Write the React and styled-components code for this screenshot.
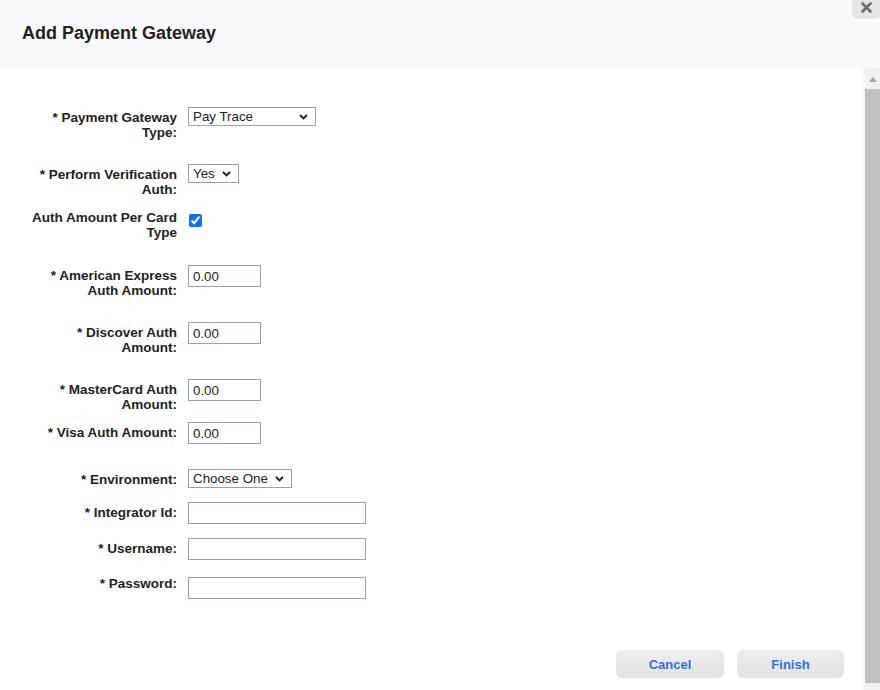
import React from "react";
import styled, { createGlobalStyle } from "styled-components";

const Global = createGlobalStyle`
  html, body { margin: 0; padding: 0; background: #ffffff; }
  body { font-family: "Liberation Sans", Arial, sans-serif; }
  * { box-sizing: border-box; }
`;

const Page = styled.div`
  position: relative;
  width: 880px;
  height: 690px;
  display: flex;
  flex-direction: column;
  overflow: hidden;
  background: #ffffff;
`;

const Header = styled.header`
  height: 68px;
  flex: none;
  display: flex;
  align-items: center;
  padding: 0 0 1px 22px;
  background: #f8f9fb;
`;

const Title = styled.h1`
  margin: 0;
  font-size: 18px;
  font-weight: 700;
  color: #222222;
  letter-spacing: 0;
`;

const CloseButton = styled.button`
  position: absolute;
  top: -10px;
  right: -1px;
  width: 29px;
  height: 29px;
  border: none;
  border-radius: 6px;
  background: #e5e5e5;
  padding: 12px 0 0 0;
  display: flex;
  justify-content: center;
  align-items: flex-start;
  cursor: pointer;
`;

const Body = styled.div`
  flex: 1;
  min-height: 0;
  display: flex;
`;

const Content = styled.div`
  flex: 1;
  display: flex;
  flex-direction: column;
  padding: 39px 19px 0 27px;
`;

const Row = styled.div`
  display: flex;
  align-items: flex-start;
  gap: 11px;
  height: ${(p) => p.$h}px;
`;

const Label = styled.label`
  width: 150px;
  flex: none;
  text-align: right;
  font-size: 13.5px;
  font-weight: 700;
  line-height: 15px;
  color: #222222;
  padding-top: ${(p) => p.$pt || 0}px;
`;

const Control = styled.div`
  position: relative;
  padding-top: ${(p) => p.$pt || 0}px;
  display: flex;
`;

const SelectWrap = styled.div`
  position: relative;
  width: ${(p) => p.$w}px;
`;

const Select = styled.select`
  appearance: none;
  -webkit-appearance: none;
  width: 100%;
  height: 19px;
  border: 1px solid #9aa1ac;
  border-radius: 0;
  background: #ffffff;
  padding: 0 0 0 4px;
  margin: 0;
  font-family: "Liberation Sans", Arial, sans-serif;
  font-size: 13.33px;
  line-height: 17px;
  color: #222222;
  outline: none;
`;

const Chevron = styled.svg`
  position: absolute;
  right: 8px;
  top: 7px;
  pointer-events: none;
`;

const TextInput = styled.input`
  width: ${(p) => p.$w}px;
  height: 22px;
  border: 1px solid #9aa1ac;
  border-radius: 0;
  padding: 0 0 0 4px;
  margin: 0;
  font-family: "Liberation Sans", Arial, sans-serif;
  font-size: 13.33px;
  color: #222222;
  background: #ffffff;
  outline: none;
`;

const Checkbox = styled.input`
  width: 13px;
  height: 13px;
  margin: 0 0 0 1px;
  accent-color: #0b74f5;
`;

const Actions = styled.div`
  display: flex;
  justify-content: flex-end;
  gap: 13px;
`;

const Button = styled.button`
  width: ${(p) => p.$w}px;
  height: 28px;
  border: none;
  border-radius: 6px;
  background: linear-gradient(#eeeeee, #e2e2e2);
  color: #2f6fe4;
  font-family: "Liberation Sans", Arial, sans-serif;
  font-size: 13px;
  font-weight: 700;
  cursor: pointer;
  padding: 0;
`;

const Scrollbar = styled.div`
  width: 17px;
  flex: none;
  display: flex;
  flex-direction: column;
  background: #f1f1f1;
  border-left: 2px solid #f6f6f6;
`;

const ScrollArrow = styled.div`
  height: 21px;
  display: flex;
  justify-content: center;
  align-items: center;
  padding-top: 1px;
`;

const ScrollThumb = styled.div`
  flex: 1;
  margin-bottom: 7px;
  background: #c1c1c1;
`;

const ChevronIcon = () => (
  <Chevron width="9" height="6" viewBox="0 0 9 6">
    <path d="M1 1 L4.5 4.5 L8 1" fill="none" stroke="#222" strokeWidth="1.9" />
  </Chevron>
);

const SelectField = ({ w, value, options }) => (
  <SelectWrap $w={w}>
    <Select defaultValue={value}>
      {options.map((o) => (
        <option key={o}>{o}</option>
      ))}
    </Select>
    <ChevronIcon />
  </SelectWrap>
);

export default function App() {
  return (
    <>
      <Global />
      <Page>
        <Header>
          <Title>Add Payment Gateway</Title>
        </Header>
        <CloseButton aria-label="Close">
          <svg width="11" height="11" viewBox="0 0 11 11">
            <path d="M1.5 1.5 L9.5 9.5 M9.5 1.5 L1.5 9.5" stroke="#6e6e6e" strokeWidth="2.6" strokeLinecap="round" />
          </svg>
        </CloseButton>
        <Body>
          <Content>
            <Row $h={57}>
              <Label $pt={3}>* Payment Gateway Type:</Label>
              <Control>
                <SelectField w={128} value="Pay Trace" options={["Pay Trace", "Authorize.Net", "Stripe"]} />
              </Control>
            </Row>
            <Row $h={46}>
              <Label $pt={3}>* Perform Verification Auth:</Label>
              <Control>
                <SelectField w={51} value="Yes" options={["Yes", "No"]} />
              </Control>
            </Row>
            <Row $h={55}>
              <Label>Auth Amount Per Card Type</Label>
              <Control $pt={4}>
                <Checkbox type="checkbox" defaultChecked />
              </Control>
            </Row>
            <Row $h={57}>
              <Label $pt={3}>* American Express Auth Amount:</Label>
              <Control>
                <TextInput $w={73} defaultValue="0.00" />
              </Control>
            </Row>
            <Row $h={57}>
              <Label $pt={3}>* Discover Auth Amount:</Label>
              <Control>
                <TextInput $w={73} defaultValue="0.00" />
              </Control>
            </Row>
            <Row $h={43}>
              <Label $pt={3}>* MasterCard Auth Amount:</Label>
              <Control>
                <TextInput $w={73} defaultValue="0.00" />
              </Control>
            </Row>
            <Row $h={47}>
              <Label $pt={3}>* Visa Auth Amount:</Label>
              <Control>
                <TextInput $w={73} defaultValue="0.00" />
              </Control>
            </Row>
            <Row $h={33}>
              <Label $pt={3}>* Environment:</Label>
              <Control>
                <SelectField w={104} value="Choose One" options={["Choose One", "Sandbox", "Production"]} />
              </Control>
            </Row>
            <Row $h={36}>
              <Label $pt={3}>* Integrator Id:</Label>
              <Control>
                <TextInput $w={178} />
              </Control>
            </Row>
            <Row $h={38}>
              <Label $pt={3}>* Username:</Label>
              <Control>
                <TextInput $w={178} />
              </Control>
            </Row>
            <Row $h={74}>
              <Label $pt={0}>* Password:</Label>
              <Control $pt={1}>
                <TextInput $w={178} type="password" />
              </Control>
            </Row>
            <Actions>
              <Button $w={108}>Cancel</Button>
              <Button $w={107}>Finish</Button>
            </Actions>
          </Content>
          <Scrollbar>
            <ScrollArrow>
              <svg width="8" height="5" viewBox="0 0 8 5">
                <path d="M0 5 L4 0 L8 5 Z" fill="#a3a3a3" />
              </svg>
            </ScrollArrow>
            <ScrollThumb />
          </Scrollbar>
        </Body>
      </Page>
    </>
  );
}
